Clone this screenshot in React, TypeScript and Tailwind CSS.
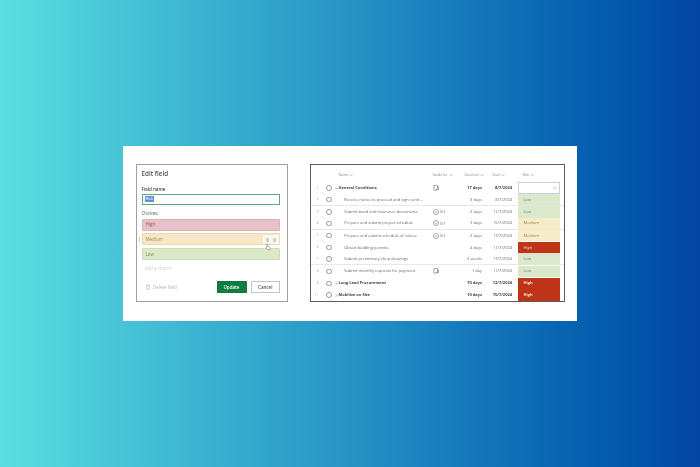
const font = 'font-["Open_Sans","Liberation_Sans",sans-serif]';

interface Row {
  num: number;
  name: string;
  bold?: boolean;
  caret?: 'down' | 'right';
  guide?: 'note' | 'check';
  guideText?: string;
  duration: string;
  start: string;
  risk?: 'Low' | 'Medium' | 'High';
  line?: boolean;
}

const rows: Row[] = [
  { num: 1, name: 'General Conditions', bold: true, caret: 'down', guide: 'note', duration: '17 days', start: '8/7/2024' },
  { num: 2, name: 'Receive notice to proceed and sign contr...', duration: '3 days', start: '8/7/2024', risk: 'Low', line: true },
  { num: 3, name: 'Submit bond and insurance documents', guide: 'check', guideText: '0/2', duration: '2 days', start: '11/7/2024', risk: 'Low' },
  { num: 4, name: 'Prepare and submit project schedule', guide: 'check', guideText: '0/7', duration: '2 days', start: '15/7/2024', risk: 'Medium', line: true },
  { num: 5, name: 'Prepare and submit schedule of values', guide: 'check', guideText: '0/2', duration: '2 days', start: '17/7/2024', risk: 'Medium' },
  { num: 6, name: 'Obtain building permits', duration: '4 days', start: '11/7/2024', risk: 'High' },
  { num: 7, name: 'Submit preliminary shop drawings', duration: '2 weeks', start: '17/7/2024', risk: 'Low', line: true },
  { num: 8, name: 'Submit monthly requests for payment', guide: 'note', duration: '1 day', start: '11/7/2024', risk: 'Low' },
  { num: 9, name: 'Long Lead Procurement', bold: true, caret: 'right', duration: '70 days', start: '12/7/2024', risk: 'High' },
  { num: 11, name: 'Mobilize on Site', bold: true, caret: 'right', duration: '10 days', start: '15/7/2024', risk: 'High' },
];

const riskClass = {
  Low: 'bg-[#dbe8cc] text-[#5f8a50]',
  Medium: 'bg-[#f6ecc9] text-[#9a8448]',
  High: 'bg-[#bf3418] text-[#f8dcd4]',
};

const Chevron = () => (
  <svg viewBox="0 0 8 8" className="h-[4px] w-[4px]" fill="none" stroke="#777" strokeWidth="1">
    <path d="M1 2.500 4 5.500 7 2.500" />
  </svg>
);

const Caret = ({ dir }: { dir: 'down' | 'right' }) => (
  <svg viewBox="0 0 8 8" className="mr-[0.500px] inline-block h-[3px] w-[3px]" fill="none" stroke="#333" strokeWidth="1.400">
    <path d={dir === 'down' ? 'M1 2.500 4 5.500 7 2.500' : 'M2.500 1 5.500 4 2.500 7'} />
  </svg>
);

const NoteIcon = () => (
  <svg viewBox="0 0 10 10" className="h-[6px] w-[6px]" fill="none" stroke="#666" strokeWidth="1">
    <path d="M1.500 1h6v5.500l-2 2h-4zM7.500 3H9v5H5.500" />
  </svg>
);

const CheckIcon = () => (
  <svg viewBox="0 0 10 10" className="h-[6px] w-[6px]" fill="none" stroke="#666" strokeWidth="0.9">
    <circle cx="5" cy="5" r="4.200" />
    <path d="M3 5.200 4.500 6.600 7 3.600" />
  </svg>
);

const EditField = () => (
  <div className="box-border flex h-[138px] w-[152px] flex-col border-[1.500px] border-[#a0a0a0] bg-white pt-[3.500px] pr-[7.500px] pl-[4.500px] blur-[0.4px]">
    <div className="text-[6.300px] leading-[10px] font-semibold text-[#555]">Edit field</div>
    <div className="mt-[7px] text-[4.500px] leading-[6px] font-semibold text-[#444]">Field name</div>
    <div className="mt-[2px] flex h-[11px] items-center border border-[#5fa585] px-[2px]">
      <span className="bg-[#5f94d8] px-[1px] text-[4px] leading-[6px] text-white">Risk</span>
    </div>
    <div className="mt-[5px] text-[4.500px] leading-[6px] text-[#555]">Choices</div>
    <div className="mt-[3px] flex flex-col gap-[2.700px]">
      <div className="flex h-[12px] items-center rounded-[1px] border border-[#dcb1b8] bg-[#e8c1c8] px-[3px] text-[4.500px] text-[#a04a55]">High</div>
      <div className="relative flex h-[12px] items-center rounded-[1px] border border-[#ead9ac] bg-[#f6e8c6] px-[3px] text-[4.500px] text-[#9a8a5a]">
        Medium
        <span className="absolute top-[3px] left-[-4px] h-[5px] w-[1.500px] bg-[#c8c8c8]" />
        <div className="absolute top-[1px] right-[0px] flex h-[9px] w-[16px] items-center justify-center gap-[4px] bg-[#fbf8ee]">
          <span className="h-[4px] w-[3px] bg-[#cfcfcf]" />
          <span className="h-[4px] w-[3px] bg-[#cfcfcf]" />
        </div>
        <svg viewBox="0 0 10 12" className="absolute top-[9px] right-[8px] h-[8px] w-[6px]" fill="#fff" stroke="#666" strokeWidth="0.8">
          <path d="M3 1.500c0-1 1.500-1 1.500 0V5l3 .8c1 .3 1 1 1 2L8 10.500H4L1.500 7.500c-.5-.8.500-1.500 1.500-.800z" />
        </svg>
      </div>
      <div className="flex h-[12px] items-center rounded-[1px] border border-[#cfdcb4] bg-[#dde8c8] px-[3px] text-[4.500px] text-[#6f8f58]">Low</div>
    </div>
    <div className="mt-[5.600px] px-[3px] text-[4.500px] leading-[6px] text-[#d0d0d0]">Add a choice</div>
    <div className="mt-[10px] flex items-center">
      <svg viewBox="0 0 10 10" className="ml-[3px] h-[6px] w-[6px]" fill="none" stroke="#aaa" strokeWidth="0.9">
        <path d="M2 2.500h6M3 2.500V9h4V2.500M4 1h2" />
      </svg>
      <span className="ml-[2.500px] text-[4.500px] text-[#b4b4b4]">Delete field</span>
      <div className="ml-auto flex h-[11.500px] w-[30px] items-center justify-center bg-[#107c41] text-[4.500px] font-semibold text-white">Update</div>
      <div className="ml-[4.500px] flex h-[11.500px] w-[28.500px] items-center justify-center border border-[#c4c4c4] text-[4.500px] font-semibold text-[#555]">Cancel</div>
    </div>
  </div>
);

const TaskTable = () => (
  <div className="box-border h-[138px] w-[255px] border-[1.500px] border-[#5c5c5c] bg-white pt-[4.500px] blur-[0.4px]">
    <div className="mb-[1.700px] flex h-[11px] items-center text-[3.500px] text-[#888]">
      <span className="ml-[27.500px] flex w-[94px] items-center gap-[1px]">Name <Chevron /></span>
      <span className="flex w-[32px] items-center gap-[1px]">Guide for <Chevron /></span>
      <span className="flex w-[28px] items-center gap-[1px]">Duration <Chevron /></span>
      <span className="flex w-[30px] items-center gap-[1px]">Start <Chevron /></span>
      <span className="flex items-center gap-[1px]">Risk <Chevron /></span>
    </div>
    {rows.map((row) => (
      <div
        key={row.num}
        className={`flex h-[11.900px] items-center text-[4px] ${row.line ? 'border-b-[0.5px] border-[#e8e8e8]' : ''} ${row.bold ? 'font-bold text-[#444]' : 'text-[#666]'}`}
      >
        <span className="w-[15px] pr-[7.500px] text-right text-[3px] font-normal text-[#999]">{row.num}</span>
        <span className="h-[5.500px] w-[5.500px] shrink-0 rounded-full border-[0.7px] border-[#999]" />
        <span className={`w-[101.500px] truncate ${row.bold ? 'pl-[3.500px]' : 'pl-[12.700px]'}`}>
          {row.caret && <Caret dir={row.caret} />}
          {row.name}
        </span>
        <span className="flex w-[24px] items-center gap-[1px] text-[3.500px]">
          {row.guide === 'note' && <NoteIcon />}
          {row.guide === 'check' && <CheckIcon />}
          {row.guideText}
        </span>
        <span className="w-[25px] text-right">{row.duration}</span>
        <span className="w-[35px] pr-[5px] text-right">{row.start}</span>
        {row.risk ? (
          <span className={`ml-[1px] flex h-[11.500px] w-[42px] items-center px-[5.500px] ${riskClass[row.risk]}`}>{row.risk}</span>
        ) : (
          <span className="ml-[1px] flex h-[11.500px] w-[42px] items-center justify-end border border-[#c8d0e8] pr-[2px]">
            <Chevron />
          </span>
        )}
      </div>
    ))}
  </div>
);

export default function App() {
  return (
    <div className={`flex h-[467px] w-[700px] items-center justify-center overflow-hidden bg-gradient-to-r from-[#5adfe0] to-[#0345a5] ${font}`}>
      <div className="flex h-[175px] w-[454px] gap-[22px] bg-white pt-[18px] pl-[13px]">
        <EditField />
        <TaskTable />
      </div>
    </div>
  );
}
